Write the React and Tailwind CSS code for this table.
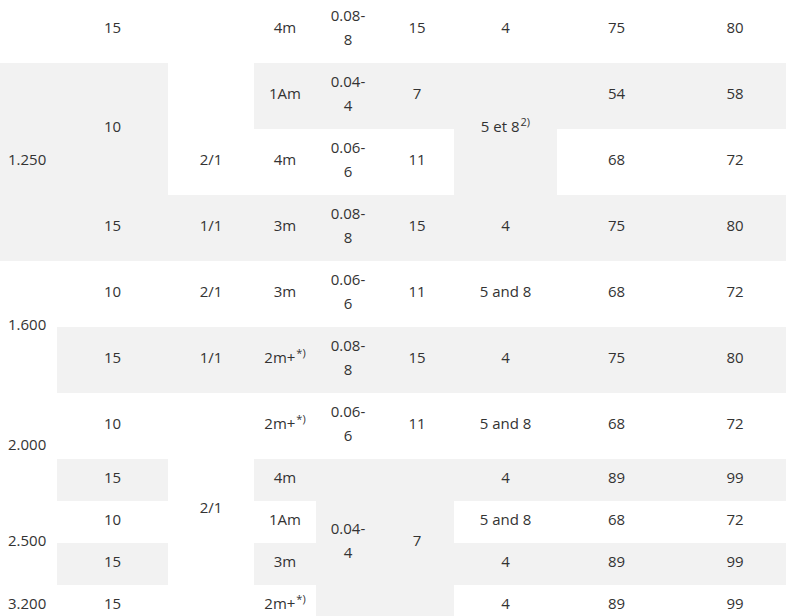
const G = "bg-[#f2f2f2]";
const W = "bg-white";

const Cell = ({ children, rs, bg = W, left }) => (
  <td
    rowSpan={rs}
    className={`${bg} pt-[6px] pb-[12px] leading-6 align-middle ${left ? "text-left pl-2" : "text-center"}`}
  >
    {children}
  </td>
);

const Two = ({ a, b }) => (
  <>
    {a}
    <br />
    {b}
  </>
);

const Sup = ({ children }) => (
  <sup className="text-[11px] relative -top-[6px] ml-px">{children}</sup>
);

export default function App() {
  return (
    <div className="w-[786px] h-[616px] overflow-hidden bg-white">
      <table
        className="-mt-[3px] table-fixed border-collapse w-[794px] text-[15px] text-[#333333]"
        style={{ fontFamily: '"Open Sans", "Noto Sans", sans-serif' }}
      >
        <colgroup>
          <col className="w-[57px]" />
          <col className="w-[111px]" />
          <col className="w-[86px]" />
          <col className="w-[62px]" />
          <col className="w-[64px]" />
          <col className="w-[74px]" />
          <col className="w-[103px]" />
          <col className="w-[119px]" />
          <col className="w-[118px]" />
        </colgroup>
        <tbody>
          <tr>
            <Cell left></Cell>
            <Cell>15</Cell>
            <Cell rs={2}></Cell>
            <Cell>4m</Cell>
            <Cell><Two a="0.08-" b="8" /></Cell>
            <Cell>15</Cell>
            <Cell>4</Cell>
            <Cell>75</Cell>
            <Cell>80</Cell>
          </tr>
          <tr>
            <Cell left rs={3} bg={G}>1.250</Cell>
            <Cell rs={2} bg={G}>10</Cell>
            <Cell bg={G}>1Am</Cell>
            <Cell bg={G}><Two a="0.04-" b="4" /></Cell>
            <Cell bg={G}>7</Cell>
            <Cell rs={2} bg={G}>5 et 8<Sup>2)</Sup></Cell>
            <Cell bg={G}>54</Cell>
            <Cell bg={G}>58</Cell>
          </tr>
          <tr>
            <Cell>2/1</Cell>
            <Cell>4m</Cell>
            <Cell><Two a="0.06-" b="6" /></Cell>
            <Cell>11</Cell>
            <Cell>68</Cell>
            <Cell>72</Cell>
          </tr>
          <tr>
            <Cell bg={G}>15</Cell>
            <Cell bg={G}>1/1</Cell>
            <Cell bg={G}>3m</Cell>
            <Cell bg={G}><Two a="0.08-" b="8" /></Cell>
            <Cell bg={G}>15</Cell>
            <Cell bg={G}>4</Cell>
            <Cell bg={G}>75</Cell>
            <Cell bg={G}>80</Cell>
          </tr>
          <tr>
            <Cell left rs={2}>1.600</Cell>
            <Cell>10</Cell>
            <Cell>2/1</Cell>
            <Cell>3m</Cell>
            <Cell><Two a="0.06-" b="6" /></Cell>
            <Cell>11</Cell>
            <Cell>5 and 8</Cell>
            <Cell>68</Cell>
            <Cell>72</Cell>
          </tr>
          <tr>
            <Cell bg={G}>15</Cell>
            <Cell bg={G}>1/1</Cell>
            <Cell bg={G}>2m+<Sup>*)</Sup></Cell>
            <Cell bg={G}><Two a="0.08-" b="8" /></Cell>
            <Cell bg={G}>15</Cell>
            <Cell bg={G}>4</Cell>
            <Cell bg={G}>75</Cell>
            <Cell bg={G}>80</Cell>
          </tr>
          <tr>
            <Cell left rs={2}>2.000</Cell>
            <Cell>10</Cell>
            <Cell rs={5}>2/1</Cell>
            <Cell>2m+<Sup>*)</Sup></Cell>
            <Cell><Two a="0.06-" b="6" /></Cell>
            <Cell>11</Cell>
            <Cell>5 and 8</Cell>
            <Cell>68</Cell>
            <Cell>72</Cell>
          </tr>
          <tr>
            <Cell bg={G}>15</Cell>
            <Cell bg={G}>4m</Cell>
            <Cell rs={4} bg={G}><Two a="0.04-" b="4" /></Cell>
            <Cell rs={4} bg={G}>7</Cell>
            <Cell bg={G}>4</Cell>
            <Cell bg={G}>89</Cell>
            <Cell bg={G}>99</Cell>
          </tr>
          <tr>
            <Cell left rs={2}>2.500</Cell>
            <Cell>10</Cell>
            <Cell>1Am</Cell>
            <Cell>5 and 8</Cell>
            <Cell>68</Cell>
            <Cell>72</Cell>
          </tr>
          <tr>
            <Cell bg={G}>15</Cell>
            <Cell bg={G}>3m</Cell>
            <Cell bg={G}>4</Cell>
            <Cell bg={G}>89</Cell>
            <Cell bg={G}>99</Cell>
          </tr>
          <tr>
            <Cell left>3.200</Cell>
            <Cell>15</Cell>
            <Cell>2m+<Sup>*)</Sup></Cell>
            <Cell>4</Cell>
            <Cell>89</Cell>
            <Cell>99</Cell>
          </tr>
        </tbody>
      </table>
    </div>
  );
}
